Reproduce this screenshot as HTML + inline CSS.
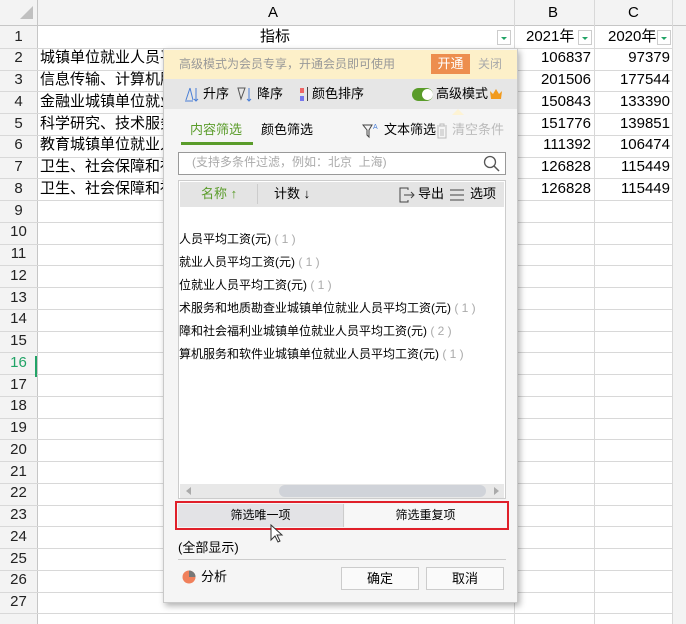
<!DOCTYPE html>
<html><head><meta charset="utf-8"><style>
*{box-sizing:border-box;margin:0;padding:0}
body{width:686px;height:624px;overflow:hidden;background:#fff;font-family:"Liberation Sans","Noto Sans CJK SC",sans-serif;font-size:14px;color:#000;position:relative;line-height:1.2}
.abs{position:absolute}
.hl{position:absolute;left:0;width:672px;height:1px;background:#d8d8d8}
.vl{position:absolute;top:0;width:1px;height:624px;background:#d8d8d8}
.rn{position:absolute;left:0;width:37px;text-align:center;font-size:15px;color:#222}
.cell{position:absolute;font-size:15px;white-space:nowrap}
.num{text-align:right}
.pop{position:absolute;left:163px;top:48px;width:355px;height:555px;background:#f5f5f5;border:1px solid #c9c9c9;box-shadow:2px 3px 6px rgba(0,0,0,.3);font-size:12px}
.t{position:absolute;white-space:nowrap}
</style></head><body>
<div class="abs" style="left:0;top:0;width:686px;height:26px;background:#f3f3f3"></div>
<div class="abs" style="left:0;top:0;width:37px;height:624px;background:#f3f3f3"></div>
<div class="abs" style="left:672px;top:0;width:14px;height:624px;background:#f3f3f3"></div>
<div class="abs" style="left:0;top:25px;width:686px;height:1px;background:#c6c6c6"></div>
<svg class="abs" style="left:20px;top:6px" width="14" height="14"><polygon points="13,0 13,13 0,13" fill="#c0c0c0"/></svg>
<div class="vl" style="left:37px;background:#c6c6c6"></div>
<div class="vl" style="left:514px"></div><div class="vl" style="left:594px"></div><div class="vl" style="left:672px"></div>
<div class="t" style="left:268px;top:4px;font-size:15px">A</div>
<div class="t" style="left:548px;top:4px;font-size:15px">B</div>
<div class="t" style="left:628px;top:4px;font-size:15px">C</div>
<div id="rows"></div>
<script>
var h='';
var A=["指标","城镇单位就业人员平均工资","信息传输、计算机服务","金融业城镇单位就业","科学研究、技术服务","教育城镇单位就业人","卫生、社会保障和社","卫生、社会保障和社"];
var B=["2021年","106837","201506","150843","151776","111392","126828","126828"];
var C=["2020年","97379","177544","133390","139851","106474","115449","115449"];
for(var i=1;i<=27;i++){var y=26+(i-1)*21.75;
h+='<div class="hl" style="top:'+(y+21.75).toFixed(1)+'px"></div>';
h+='<div class="rn" style="top:'+(y+1.5)+'px;'+(i==16?'color:#21a366;':'')+'">'+i+'</div>';
if(i<=8){if(i==1){h+='<div class="cell" style="left:260px;top:'+(y+1.5)+'px">指标</div><div class="cell" style="left:526px;top:'+(y+1.5)+'px">2021年</div><div class="cell" style="left:608px;top:'+(y+1.5)+'px">2020年</div>';}
else{h+='<div class="cell" style="left:40px;top:'+(y+1.5)+'px">'+A[i-1]+'</div><div class="cell num" style="left:514px;width:77px;top:'+(y+1.5)+'px">'+B[i-1]+'</div><div class="cell num" style="left:594px;width:76px;top:'+(y+1.5)+'px">'+C[i-1]+'</div>';}}}
document.getElementById('rows').innerHTML=h;
</script>
<div class="abs" style="left:0;top:356px;width:37px;height:21px;border-right:2px solid #21a366"></div>
<div class="abs" style="left:497px;top:30px;width:14px;height:15px;border:1px solid #ccc;background:#fff"><svg width="12" height="13"><polygon points="3,6 9,6 6,9" fill="#21a366"/></svg></div>
<div class="abs" style="left:578px;top:30px;width:14px;height:15px;border:1px solid #ccc;background:#fff"><svg width="12" height="13"><polygon points="3,6 9,6 6,9" fill="#21a366"/></svg></div>
<div class="abs" style="left:657px;top:30px;width:14px;height:15px;border:1px solid #ccc;background:#fff"><svg width="12" height="13"><polygon points="3,6 9,6 6,9" fill="#21a366"/></svg></div>

<div class="pop">
<div class="abs" style="left:0;top:1px;width:353px;height:29px;background:#fdf0c9"></div>
<div class="t" style="left:15px;top:8px;color:#999">高级模式为会员专享，开通会员即可使用</div>
<div class="abs" style="left:267px;top:5px;width:39px;height:20px;background:#ed8e4e;color:#fff;text-align:center;line-height:20px;font-size:13px">开通</div>
<div class="t" style="left:314px;top:8px;color:#aaa">关闭</div>
<div class="abs" style="left:0;top:30px;width:353px;height:30px;background:#e6e6e6"></div>
<svg class="abs" style="left:20px;top:37px" width="16" height="17"><path d="M2 14 L6 2 M6 2 L9 14 M1 15 H9" stroke="#4a7fd6" fill="none"/><path d="M12 2 V15 M10 13 L12 15 L14 13" stroke="#4a7fd6" fill="none"/></svg>
<div class="t" style="left:39px;top:37px;font-size:13px">升序</div>
<svg class="abs" style="left:73px;top:37px" width="16" height="17"><path d="M1 2 H8 L4 13 Z" stroke="#555" fill="none"/><path d="M12 2 V15 M10 13 L12 15 L14 13" stroke="#4a7fd6" fill="none"/></svg>
<div class="t" style="left:93px;top:37px;font-size:13px">降序</div>
<div class="abs" style="left:136px;top:39px;width:4px;height:5px;background:#e66"></div><div class="abs" style="left:136px;top:47px;width:4px;height:5px;background:#77e"></div>
<div class="abs" style="left:143px;top:38px;width:1px;height:14px;background:#444"></div>
<div class="t" style="left:148px;top:37px;font-size:13px">颜色排序</div>
<div class="abs" style="left:248px;top:39px;width:21px;height:13px;border-radius:7px;background:#5a9c2a"></div><div class="abs" style="left:258px;top:40px;width:11px;height:11px;border-radius:50%;background:#fff"></div>
<div class="t" style="left:272px;top:37px;font-size:13px">高级模式</div>
<svg class="abs" style="left:326px;top:40px" width="12" height="10"><path d="M0 2 L3 5 L6 0 L9 5 L12 2 L11 10 H1 Z" fill="#f19a1d"/></svg>
<svg class="abs" style="left:288px;top:60px" width="12" height="6"><polygon points="6,0 0,6 12,6" fill="#fdf3d4"/></svg>
<div class="t" style="left:26px;top:73px;color:#5a9c2a;font-size:13px">内容筛选</div>
<div class="abs" style="left:17px;top:93px;width:72px;height:3px;background:#5a9c2a"></div>
<div class="t" style="left:97px;top:73px;font-size:13px">颜色筛选</div>
<svg class="abs" style="left:198px;top:73px" width="16" height="17"><path d="M1 3 H10 L7 8 V15 L5 13 V8 Z" stroke="#444" fill="none"/><text x="11" y="7" font-size="7" fill="#4a7fd6">A</text></svg>
<div class="t" style="left:220px;top:73px;font-size:13px">文本筛选</div>
<svg class="abs" style="left:271px;top:74px" width="14" height="16"><path d="M2 3 H12 M5 3 V1 H9 V3 M3 4 V15 H11 V4 M6 6 V13 M8 6 V13" stroke="#bbb" fill="none"/></svg>
<div class="t" style="left:288px;top:73px;color:#bbb;font-size:13px">清空条件</div>
<div class="abs" style="left:14px;top:103px;width:328px;height:23px;background:#fff;border:1px solid #999"></div>
<div class="t" style="left:28px;top:106px;color:#aaa">(支持多条件过滤，例如：北京&nbsp;&nbsp;上海)</div>
<svg class="abs" style="left:319px;top:106px" width="18" height="18"><circle cx="7" cy="7" r="5.5" stroke="#555" stroke-width="1.3" fill="none"/><path d="M11 11 L16 16" stroke="#555" stroke-width="1.5"/></svg>
<div class="abs" style="left:14px;top:131px;width:328px;height:319px;background:#fff;border:1px solid #ccc"></div>
<div class="abs" style="left:16px;top:133px;width:324px;height:25px;background:#e4e4e4"></div>
<div class="t" style="left:37px;top:137px;color:#5a9c2a;font-size:13px">名称 ↑</div>
<div class="abs" style="left:93px;top:135px;width:1px;height:20px;background:#ccc"></div>
<div class="t" style="left:110px;top:137px;font-size:13px">计数 ↓</div>
<svg class="abs" style="left:235px;top:138px" width="16" height="16"><path d="M9 3 V1 H1 V15 H9 V13 M5 8 H15 M12 5 L15 8 L12 11" stroke="#444" fill="none"/></svg>
<div class="t" style="left:254px;top:137px;font-size:13px">导出</div>
<svg class="abs" style="left:286px;top:140px" width="14" height="12"><path d="M0 1 H14 M0 6 H14 M0 11 H14" stroke="#444"/></svg>
<div class="t" style="left:306px;top:137px;font-size:13px">选项</div>
<div class="t" style="left:15px;top:183px">人员平均工资(元) <span style="color:#aaa">( 1 )</span></div>
<div class="t" style="left:15px;top:206px">就业人员平均工资(元) <span style="color:#aaa">( 1 )</span></div>
<div class="t" style="left:15px;top:229px">位就业人员平均工资(元) <span style="color:#aaa">( 1 )</span></div>
<div class="t" style="left:15px;top:252px">术服务和地质勘查业城镇单位就业人员平均工资(元) <span style="color:#aaa">( 1 )</span></div>
<div class="t" style="left:15px;top:275px">障和社会福利业城镇单位就业人员平均工资(元) <span style="color:#aaa">( 2 )</span></div>
<div class="t" style="left:15px;top:298px">算机服务和软件业城镇单位就业人员平均工资(元) <span style="color:#aaa">( 1 )</span></div>
<div class="abs" style="left:16px;top:435px;width:324px;height:14px;background:#e8e8e8"></div>
<div class="abs" style="left:115px;top:436px;width:207px;height:12px;border-radius:6px;background:#d0d3d9"></div>
<svg class="abs" style="left:22px;top:438px" width="6" height="8"><polygon points="5,0 0,4 5,8" fill="#aaa"/></svg>
<svg class="abs" style="left:330px;top:438px" width="6" height="8"><polygon points="0,0 5,4 0,8" fill="#aaa"/></svg>
<div class="abs" style="left:11px;top:452px;width:334px;height:29px;border:2px solid #e0202a"></div>
<div class="abs" style="left:14px;top:455px;width:166px;height:23px;background:#e3e3e6;border-right:1px solid #ccc;text-align:center;line-height:23px">筛选唯一项</div>
<div class="abs" style="left:181px;top:455px;width:161px;height:23px;background:#f7f7f7;text-align:center;line-height:23px">筛选重复项</div>
<svg class="abs" style="left:106px;top:475px" width="14" height="20"><path d="M1 1 V16 L5 12 L8 18 L10 17 L7 11 H12 Z" fill="#fff" stroke="#333"/></svg>
<div class="t" style="left:14px;top:491px;font-size:13px">(全部显示)</div>
<div class="abs" style="left:14px;top:510px;width:328px;height:1px;background:#ccc"></div>
<svg class="abs" style="left:18px;top:521px" width="14" height="14"><circle cx="7" cy="7" r="6.5" fill="#f0805b"/><path d="M7 7 V0.5 A6.5 6.5 0 0 1 13.5 7 Z" fill="#777"/></svg>
<div class="t" style="left:37px;top:520px;font-size:13px">分析</div>
<div class="abs" style="left:177px;top:518px;width:78px;height:23px;border:1px solid #ccc;background:#fafafa;text-align:center;line-height:21px;font-size:13px">确定</div>
<div class="abs" style="left:262px;top:518px;width:78px;height:23px;border:1px solid #ccc;background:#fafafa;text-align:center;line-height:21px;font-size:13px">取消</div>
</div>
</body></html>
